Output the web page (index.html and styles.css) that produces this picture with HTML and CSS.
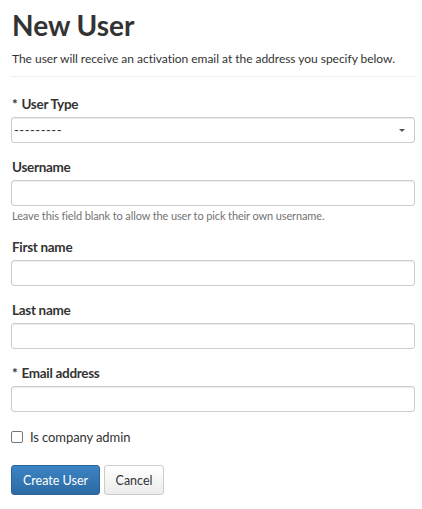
FILE: index.html
```html
<!DOCTYPE html>
<html>
<head>
<meta charset="utf-8">
<link rel="stylesheet" href="styles.css">
</head>
<body>
<div class="page">
  <h1 class="title">New User</h1>
  <p class="lead">The user will receive an activation email at the address you specify below.</p>
  <hr class="rule">
  <form class="form">
    <div class="group">
      <label class="label"><span class="req">*</span> User Type</label>
      <div class="select">
        <span class="select-text">---------</span>
        <span class="caret"></span>
      </div>
    </div>
    <div class="group">
      <label class="label">Username</label>
      <div class="input"></div>
      <div class="help">Leave this field blank to allow the user to pick their own username.</div>
    </div>
    <div class="group">
      <label class="label">First name</label>
      <div class="input"></div>
    </div>
    <div class="group">
      <label class="label">Last name</label>
      <div class="input"></div>
    </div>
    <div class="group">
      <label class="label"><span class="req">*</span> Email address</label>
      <div class="input"></div>
    </div>
    <div class="check">
      <span class="box"></span>
      <span class="check-label">Is company admin</span>
    </div>
    <div class="actions">
      <span class="btn btn-primary">Create User</span>
      <span class="btn btn-default">Cancel</span>
    </div>
  </form>
</div>
</body>
</html>
```
FILE: styles.css
```css
html, body {
  margin: 0;
  padding: 0;
  background: #fff;
}
body {
  font-family: Lato, "Open Sans", sans-serif;
  color: #333;
}
.page {
  padding: 8px 7px 0 11px;
}
.title {
  margin: 0;
  font-size: 28px;
  line-height: 34px;
  font-weight: 700;
  color: #333;
  padding-left: 1px;
}
.lead {
  margin: 8px 0 0 0;
  padding-left: 1px;
  font-size: 12px;
  letter-spacing: -0.03px;
  line-height: 18px;
  color: #333;
  white-space: nowrap;
}
.rule {
  margin: 8px 0 0 0;
  border: 0;
  border-top: 1px solid #eee;
}
.form {
  display: flex;
  flex-direction: column;
  padding-top: 17px;
}
.group {
  display: flex;
  flex-direction: column;
  margin-bottom: 14px;
}
.label {
  font-size: 13.5px;
  letter-spacing: -0.3px;
  font-weight: 700;
  line-height: 20px;
  margin-bottom: 3px;
  padding-left: 1px;
}
.req {
  display: inline-block;
  margin-right: 1px;
}
.input, .select {
  height: 24px;
  border: 1px solid #ccc;
  border-radius: 3px;
  box-shadow: inset 0 1px 1px rgba(0,0,0,0.075);
  background: #fff;
}
.select {
  display: flex;
  align-items: center;
  justify-content: space-between;
  padding: 0 9px 0 2px;
}
.select-text {
  font-size: 13px;
  letter-spacing: 0.5px;
  color: #333;
}
.caret {
  width: 0;
  height: 0;
  border-left: 3px solid transparent;
  border-right: 3px solid transparent;
  border-top: 3px solid #555;
}
.help {
  font-size: 11px;
  letter-spacing: -0.12px;
  line-height: 15px;
  color: #737373;
  margin-top: 2px;
  padding-left: 1px;
}
.check {
  display: flex;
  align-items: center;
  gap: 7px;
  margin-top: 1px;
  height: 20px;
}
.box {
  width: 10px;
  height: 10px;
  border: 1px solid #767676;
  border-radius: 2px;
  background: #fff;
}
.check-label {
  font-size: 13px;
  letter-spacing: -0.1px;
  line-height: 20px;
  color: #333;
}
.actions {
  display: flex;
  gap: 4px;
  margin-top: 18px;
}
.btn {
  display: inline-flex;
  align-items: center;
  justify-content: center;
  box-sizing: border-box;
  height: 30px;
  padding: 0 11px;
  font-size: 12.5px;
  border-radius: 3px;
  border: 1px solid;
}
.btn-primary {
  color: #fff;
  background: linear-gradient(#3d84c4, #2c6aa4);
  border-color: #2a629a;
}
.btn-default {
  color: #333;
  background: linear-gradient(#fff, #ececec);
  border-color: #ccc;
  padding: 0 10.5px;
}
```
